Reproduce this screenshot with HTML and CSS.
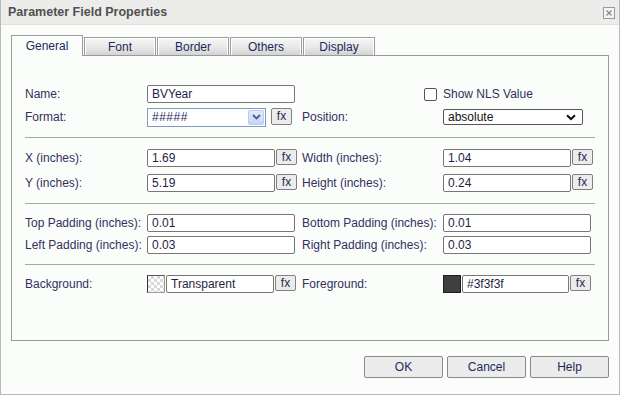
FILE: index.html
```html
<!DOCTYPE html>
<html lang="en">
<head>
    <meta charset="UTF-8">
    <title>Parameter Field Properties</title>
    <link rel="stylesheet" href="styles.css">
</head>
<body>
    <div class="dialog">
        <div class="titlebar">
            <span class="title">Parameter Field Properties</span>
            <span class="close">
                <svg width="12" height="12" viewBox="0 0 12 12">
                    <rect x="0.5" y="0.5" width="11" height="11" fill="#f4f4f4" stroke="#9a9a9a"/>
                    <path d="M3.5 3.5 L8.5 8.5 M8.5 3.5 L3.5 8.5" stroke="#8a8a8a" stroke-width="1.3"/>
                </svg>
            </span>
        </div>
        <div class="body">
            <div class="tabs">
                <div class="tab active">General</div>
                <div class="tab">Font</div>
                <div class="tab">Border</div>
                <div class="tab">Others</div>
                <div class="tab">Display</div>
            </div>
            <div class="panel">
                <!-- name / format -->
                <div class="row r-name">
                    <div class="lbl">Name:</div>
                    <div class="fld"><div class="inp w148">BVYear</div></div>
                    <div class="lbl2 chk-cell"><span class="chk"></span></div>
                    <div class="fld2">Show NLS Value</div>
                </div>
                <div class="row r-gap5">
                    <div class="lbl">Format:</div>
                    <div class="fld">
                        <div class="xpsel">
                            <span class="xpval">#####</span>
                            <span class="xpbtn">
                                <svg width="9" height="6" viewBox="0 0 9 6"><path d="M1 1 L4.5 4.5 L8 1" fill="none" stroke="#4d5f86" stroke-width="1.8"/></svg>
                            </span>
                        </div>
                        <span class="fx fx-sep">fx</span>
                    </div>
                    <div class="lbl2">Position:</div>
                    <div class="fld2">
                        <div class="sel">
                            <span>absolute</span>
                            <svg width="10" height="7" viewBox="0 0 10 7"><path d="M1 1.2 L5 5 L9 1.2" fill="none" stroke="#111" stroke-width="2"/></svg>
                        </div>
                    </div>
                </div>
                <div class="sep s11"></div>

                <!-- position and size -->
                <div class="row r-gap11">
                    <div class="lbl">X (inches):</div>
                    <div class="fld"><div class="inp w128">1.69</div><span class="fx">fx</span></div>
                    <div class="lbl2">Width (inches):</div>
                    <div class="fld2"><div class="inp w128">1.04</div><span class="fx">fx</span></div>
                </div>
                <div class="row r-gap7">
                    <div class="lbl">Y (inches):</div>
                    <div class="fld"><div class="inp w128">5.19</div><span class="fx">fx</span></div>
                    <div class="lbl2">Height (inches):</div>
                    <div class="fld2"><div class="inp w128">0.24</div><span class="fx">fx</span></div>
                </div>
                <div class="sep s11"></div>

                <!-- padding -->
                <div class="row r-gap10">
                    <div class="lbl">Top Padding (inches):</div>
                    <div class="fld"><div class="inp w148">0.01</div></div>
                    <div class="lbl2">Bottom Padding (inches):</div>
                    <div class="fld2"><div class="inp w148">0.01</div></div>
                </div>
                <div class="row r-gap4">
                    <div class="lbl">Left Padding (inches):</div>
                    <div class="fld"><div class="inp w148">0.03</div></div>
                    <div class="lbl2">Right Padding (inches):</div>
                    <div class="fld2"><div class="inp w148">0.03</div></div>
                </div>
                <div class="sep s10"></div>

                <!-- colors -->
                <div class="row r-gap10">
                    <div class="lbl">Background:</div>
                    <div class="fld">
                        <span class="swatch checker"></span>
                        <div class="inp w108">Transparent</div>
                        <span class="fx">fx</span>
                    </div>
                    <div class="lbl2">Foreground:</div>
                    <div class="fld2">
                        <span class="swatch dark"></span>
                        <div class="inp w107">#3f3f3f</div>
                        <span class="fx">fx</span>
                    </div>
                </div>
            </div>
            <div class="footer">
                <button class="btn">OK</button>
                <button class="btn">Cancel</button>
                <button class="btn">Help</button>
            </div>
        </div>
    </div>
</body>
</html>
```

FILE: styles.css
```css
*{
    box-sizing: border-box;
}
body{
    margin: 0;
    font-family: "Liberation Sans", Arial, sans-serif;
    font-size: 12px;
    color: #33305e;
    background: #fbfdfb;
}
.dialog{
    width: 620px;
    height: 395px;
    border: 1px solid #b9b9b9;
    border-top: none;
    background: #fbfdfb;
}
.titlebar{
    height: 25px;
    background: #ececea;
    border-bottom: 1px solid #e0e0de;
    display: flex;
    align-items: center;
    justify-content: space-between;
    padding: 0 4px 0 7px;
}
.title{
    font-weight: bold;
    font-size: 12.5px;
    color: #505050;
}
.close{
    display: flex;
    margin-top: 1px;
}
.body{
    padding: 10px 10px 0 10px;
}
.tabs{
    display: flex;
    align-items: flex-end;
    height: 20px;
    gap: 1px;
}
.tab{
    width: 72px;
    height: 18px;
    border: 1px solid #9c9c9c;
    border-bottom: none;
    box-shadow: inset 1px 1px 0 #fff, inset -1px 0 0 #fff;
    background: linear-gradient(#f6f6f6, #e8e8e8 55%, #d3d3d3);
    color: #1c2a5a;
    text-align: center;
    line-height: 18px;
}
.tab.active{
    height: 21px;
    margin-bottom: -1px;
    background: #fbfdfb;
    box-shadow: none;
    line-height: 21px;
    position: relative;
    z-index: 1;
}
.panel{
    width: 598px;
    height: 286px;
    border: 1px solid #9a9a9a;
    padding: 29px 13px 0 13px;
}
.row{
    display: flex;
    align-items: center;
    height: 18px;
}
.r-gap4{ margin-top: 4px; }
.r-gap5{ margin-top: 5px; }
.r-gap7{ margin-top: 7px; }
.r-gap10{ margin-top: 10px; }
.r-gap11{ margin-top: 11px; }
.lbl{
    width: 122px;
}
.fld{
    width: 155px;
    display: flex;
    align-items: center;
}
.lbl2{
    width: 141px;
}
.fld2{
    display: flex;
    align-items: center;
}
.chk-cell{
    display: flex;
    justify-content: flex-end;
    padding-right: 6px;
}
.chk{
    width: 13px;
    height: 13px;
    border: 1px solid #555;
    border-radius: 2px;
    background: #fff;
}
.sep{
    height: 1px;
    background: #a8a8a8;
}
.s10{ margin-top: 10px; }
.s11{ margin-top: 11px; }
.inp{
    height: 18px;
    border: 1px solid #767676;
    border-radius: 2px;
    background: #fff;
    padding-left: 4px;
    line-height: 16px;
    color: #1f1f45;
}
.w148{ width: 148px; }
.w128{ width: 128px; }
.w108{ width: 108px; }
.w107{ width: 107px; }
.fx{
    width: 21px;
    height: 16px;
    margin-top: -2px;
    margin-left: 1px;
    border: 1px solid #7f7f7f;
    border-radius: 2px;
    background: #ececec;
    text-align: center;
    line-height: 14px;
    font-size: 12px;
    color: #2a2a50;
}
.fx-sep{
    margin-left: 5px;
    height: 17px;
}
.xpsel{
    width: 119px;
    height: 19px;
    border: 1px solid #7f9db9;
    background: #fff;
    display: flex;
    align-items: center;
    justify-content: space-between;
    padding: 1px;
}
.xpval{
    padding-left: 3px;
    color: #1d2a5c;
    letter-spacing: 0.5px;
}
.xpbtn{
    width: 16px;
    height: 15px;
    border: 1px solid #b9cdf4;
    border-radius: 2px;
    background: linear-gradient(#e3ebfc, #c3d5f6);
    display: flex;
    align-items: center;
    justify-content: center;
}
.sel{
    width: 140px;
    height: 16px;
    border: 1px solid #555;
    border-radius: 2px;
    background: #fff;
    display: flex;
    align-items: center;
    justify-content: space-between;
    padding: 0 6px 0 4px;
    color: #111;
}
.swatch{
    width: 18px;
    height: 18px;
    margin-right: 1px;
    border: 1px solid #9a9a9a;
}
.swatch.checker{
    border-left-color: #333;
    border-top-color: #555;
    background: repeating-conic-gradient(#d8d8d8 0 25%, #fff 0 50%) 0 0/6px 6px;
}
.swatch.dark{
    background: #3f3f3f;
    border-color: #1e1e1e;
}
.footer{
    display: flex;
    justify-content: flex-end;
    gap: 4px;
    margin-top: 15px;
}
.btn{
    width: 79px;
    height: 22px;
    border: 1px solid #8a8a8a;
    border-radius: 2px;
    background: #ececec;
    font-family: "Liberation Sans", Arial, sans-serif;
    font-size: 12px;
    color: #1c2a5a;
    padding: 0;
}
```
